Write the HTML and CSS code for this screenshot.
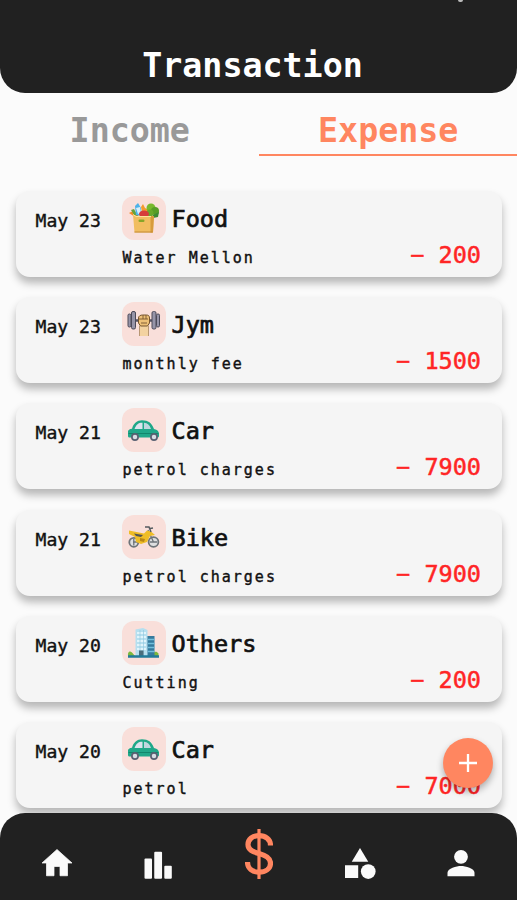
FILE: index.html
```html
<!DOCTYPE html>
<html lang="en">
  <head>
    <meta charset="UTF-8" />
    <meta name="viewport" content="width=device-width, initial-scale=1.0" />
    <title>Transaction</title>
    <link rel="stylesheet" href="styles.css">
  </head>
  <body>
    <svg class="sprite" width="0" height="0">
      <symbol id="car" viewBox="0 0 44 44">
        <path d="M6 28v-4.500c0-1.600 1.500-2.300 4-2.700 1.600-5.500 5-8.500 10-8.500 6.500 0 9.500 2.700 12 8.700 3.500.7 5 2.500 5 5V28c0 1-.8 1.500-2 1.500H8c-1.300 0-2-.5-2-1.500z" fill="#20a889" />
        <path d="M12.500 21c1.600-4.300 4-6.200 7.500-6.200h.5V21z" fill="#dce3ee" />
        <path d="M22 14.800c3.600.2 5.600 2.200 7 6.200h-7z" fill="#bfd7df" />
        <path d="M6.500 25.500h30" stroke="#11866c" />
        <circle cx="13" cy="29" r="3.100" fill="#d8dce3" stroke="#596172" stroke-width="1.700" />
        <circle cx="32" cy="29" r="3.100" fill="#d8dce3" stroke="#596172" stroke-width="1.700" />
      </symbol>
    </svg>

    <header class="header">
      <span class="header__mark"></span>
      <h1>Transaction</h1>
    </header>

    <nav class="tabs">
      <a class="tab">Income</a>
      <a class="tab tab--active">Expense</a>
    </nav>

    <main class="list">
      <article class="card">
        <span class="card__date">May 23</span>
        <div class="card__body">
          <div class="card__title">
            <svg class="card__icon" viewBox="0 0 44 44">
              <path d="M7 17l4-2 6 5-4 1z" fill="#f28c28" />
              <path d="M9 14l3-1 4 7-4-1z" fill="#67a33b" />
              <path d="M13 10l3-3 3 5 1 8-6-1z" fill="#4db2e8" />
              <path d="M14 12l4-1 1 6-3 1z" fill="#d7effa" />
              <path d="M21 20l-2-9 2-3 2 4 4 2-1 7z" fill="#f39a2d" />
              <circle cx="29" cy="12" r="4.500" fill="#79b82e" />
              <circle cx="33" cy="15" r="4" fill="#579d27" />
              <circle cx="28" cy="17" r="3.500" fill="#68a82b" />
              <path d="M31 19l6-3-1 5-5 1z" fill="#3d8b35" />
              <ellipse cx="22" cy="18" rx="5" ry="3.500" fill="#d63c3b" />
              <path d="M11 18.500l3 1.500h18l-1 16.500H12.500z" fill="#f1bd60" />
              <path d="M28.500 20H32l-1 16.500h-2.500z" fill="#d79b3b" />
              <path d="M11 18.500l3 2h15" fill="none" stroke="#ffe09a" />
              <path d="M12.500 36h18" stroke="#c48a35" />
              <rect x="16.500" y="23.500" width="6" height="2.500" rx="1.200" fill="#86a528" />
            </svg>
            <h2>Food</h2>
          </div>
          <p>Water Mellon</p>
        </div>
        <span class="card__amount">− 200</span>
      </article>

      <article class="card">
        <span class="card__date">May 23</span>
        <div class="card__body">
          <div class="card__title">
            <svg class="card__icon" viewBox="0 0 44 44">
              <path d="M17.500 22h9V34h-9z" fill="#f3d2a0" />
              <path d="M17.500 24v10M26.500 24v10" stroke="#a8865f" stroke-width=".8" />
              <path d="M6 18.500h32" stroke="#555463" stroke-width="2.500" />
              <g fill="#9694a8" stroke="#4c4a59">
                <rect x="6" y="12" width="3" height="13" rx="1.300" />
                <rect x="9.500" y="9.500" width="4" height="17.500" rx="1.500" />
                <rect x="30" y="9.500" width="4" height="17.500" rx="1.500" />
                <rect x="34.500" y="12" width="3" height="13" rx="1.300" />
              </g>
              <path d="M16.500 16c0-2 2-3 4-3h4c2 0 3 1 3 3v5l-2 3h-7l-2-3z" fill="#edc077" stroke="#76552f" />
              <path d="M17 17h9M19 21h6M21 13v4M24 13v4" stroke="#76552f" stroke-width=".9" />
            </svg>
            <h2>Jym</h2>
          </div>
          <p>monthly fee</p>
        </div>
        <span class="card__amount">− 1500</span>
      </article>

      <article class="card">
        <span class="card__date">May 21</span>
        <div class="card__body">
          <div class="card__title">
            <svg class="card__icon"><use href="#car" /></svg>
            <h2>Car</h2>
          </div>
          <p>petrol charges</p>
        </div>
        <span class="card__amount">− 7900</span>
      </article>

      <article class="card">
        <span class="card__date">May 21</span>
        <div class="card__body">
          <div class="card__title">
            <svg class="card__icon" viewBox="0 0 44 44">
              <g fill="#dedfe0" stroke="#6e7479" stroke-width="1.800">
                <circle cx="11.800" cy="27.300" r="4.500" />
                <circle cx="31.500" cy="27" r="4.900" />
              </g>
              <path d="M11 27h10l3-3M26 15l5.500 12M11.800 24v6.500M28 27h7" fill="none" stroke="#6e7479" stroke-width="1.300" />
              <path d="M7 15.500l10 2 5 1 3-3 4 1 4 3.500-5 1-3 6-6 2-5-2-1-5-6-3z" fill="#efbd27" />
              <path d="M12 18.500l9 1.500-2 2-5-1z" fill="#545554" />
              <path d="M18 23l5 1-1 3-4-1z" fill="#b98715" />
              <path d="M23 12h4l2 5M28 13.500l3-.5" fill="none" stroke="#555b60" stroke-width="1.500" />
            </svg>
            <h2>Bike</h2>
          </div>
          <p>petrol charges</p>
        </div>
        <span class="card__amount">− 7900</span>
      </article>

      <article class="card">
        <span class="card__date">May 20</span>
        <div class="card__body">
          <div class="card__title">
            <svg class="card__icon" viewBox="0 0 44 44">
              <path d="M6 35c-.5-4 1.500-5.500 4-3.500L13 35zM30 35c1-4 4-6 6.500-2.500V35z" fill="#7db83c" />
              <path d="M24 15h8.500v20H24z" fill="#367b9e" />
              <path d="M26 18.500h6.500M26 22.500h6.500M26 26.500h6.500M26 30.500h6.500" stroke="#72bfdc" stroke-width="1.500" />
              <path d="M13.500 8.500L21 7l4.500 2v26h-12z" fill="#b5dfef" />
              <path d="M15 12h9M15 16h9M15 20h9M15 24h9M15 28h9" stroke="#e0f4fb" stroke-width="1.800" />
              <path d="M18 9v26M21.500 9v26" stroke="#94c9df" stroke-width=".7" />
              <path d="M17 29.500h4.500V35H17z" fill="#496e7d" />
              <path d="M6 35.500h31" stroke="#217b9a" stroke-width="2.500" />
            </svg>
            <h2>Others</h2>
          </div>
          <p>Cutting</p>
        </div>
        <span class="card__amount">− 200</span>
      </article>

      <article class="card">
        <span class="card__date">May 20</span>
        <div class="card__body">
          <div class="card__title">
            <svg class="card__icon"><use href="#car" /></svg>
            <h2>Car</h2>
          </div>
          <p>petrol</p>
        </div>
        <span class="card__amount">− 7000</span>
      </article>
    </main>

    <button class="fab" aria-label="Add">
      <svg viewBox="0 0 18 18"><path d="M9 0v18M0 9h18" /></svg>
    </button>

    <footer class="navbar">
      <a class="navbar__item">
        <svg viewBox="0 0 24 24"><path d="M10 20.500v-6.200h4v6.200h5V12h3L12 3 2 12h3v8.500z" stroke-width=".5" stroke-linejoin="round" stroke="currentColor" /></svg>
      </a>
      <a class="navbar__item">
        <svg viewBox="0 0 24 24">
          <rect x="3" y="9" width="5" height="13.500" rx=".7" />
          <rect x="9.500" y="4.500" width="5.200" height="18" rx=".7" />
          <rect x="16.200" y="13.800" width="5" height="8.700" rx=".7" />
        </svg>
      </a>
      <a class="navbar__item navbar__item--active">
        <svg viewBox="0 0 28 50">
          <path d="M14 0v50" stroke-width="3.200" />
          <path d="M25.500 16.500C25.500 10.500 20.500 6.700 14 6.700S3 10.200 3 15.500c0 5.300 4.500 7.300 11 9s11.500 4 11.500 9.700c0 5.600-5 8.900-11.500 8.900S2.500 39.500 2.500 33" stroke-width="5.200" />
        </svg>
      </a>
      <a class="navbar__item">
        <svg viewBox="0 0 24 24">
          <path d="M12 2l-5.500 9.200h11z" />
          <circle cx="17.500" cy="17.700" r="4.900" />
          <path d="M2 13.500h8.800V22H2z" />
        </svg>
      </a>
      <a class="navbar__item">
        <svg viewBox="0 0 24 24">
          <circle cx="12" cy="7.900" r="4.600" />
          <path d="M3 20.800v-2.300c0-3 6-4.500 9-4.500s9 1.500 9 4.500v2.300z" />
        </svg>
      </a>
    </footer>
  </body>
</html>
```
FILE: styles.css
```css
* {
  padding: 0;
  margin: 0;
  box-sizing: border-box;
}

:root {
  --dark: #212121;
  --accent: #ff8660;
  --background: #fbfbfb;
  --card: #f5f5f5;
  --amount: #ff2525;
}

body {
  height: 100vh;
  overflow: hidden;
  position: relative;
  display: flex;
  flex-direction: column;
  background-color: var(--background);
  font-family: "DejaVu Sans Mono", monospace;
  color: #111;
}

.sprite {
  position: absolute;
}

.header {
  position: relative;
  flex: none;
  height: 93px;
  padding: 46px 12px 0 0;
  border-radius: 0 0 25px 25px;
  background-color: var(--dark);
  text-align: center;
}

.header h1 {
  font-size: 33.3px;
  line-height: 40px;
  color: #fff;
}

.header__mark {
  position: absolute;
  top: 0;
  right: 54px;
  width: 5px;
  height: 2px;
  border-radius: 0 0 2px 2px;
  background-color: #bbb;
}

.tabs {
  flex: none;
  display: flex;
  height: 63px;
}

.tab {
  flex: 1;
  padding: 18px 0 0 1px;
  font-size: 33.3px;
  font-weight: bold;
  line-height: 40px;
  text-align: center;
  color: #999;
}

.tab--active {
  color: var(--accent);
  border-bottom: 2px solid var(--accent);
}

.list {
  flex: 1;
  min-height: 0;
  display: flex;
  flex-direction: column;
  gap: 20.2px;
  padding: 35px 15px 0 16px;
}

.card {
  flex: none;
  display: flex;
  height: 86px;
  padding: 5px 21px 0 19.5px;
  border-radius: 14px;
  background-color: var(--card);
  box-shadow: 0 6px 8px rgba(0, 0, 0, 0.28);
}

.card__date {
  width: 86px;
  padding-top: 14px;
  font-size: 18.1px;
  line-height: 22px;
  -webkit-text-stroke: 0.4px;
}

.card__body {
  flex: 1;
}

.card__title {
  display: flex;
  gap: 6px;
}

.card__icon {
  width: 44px;
  height: 44px;
  border-radius: 12px;
  background-color: #f9dfda;
}

.card h2 {
  padding-top: 9px;
  font-size: 23.5px;
  font-weight: normal;
  line-height: 28px;
  -webkit-text-stroke: 0.7px;
}

.card p {
  padding: 8px 0 0 1px;
  font-size: 15px;
  line-height: 20px;
  letter-spacing: 2px;
  -webkit-text-stroke: 0.4px;
}

.card__amount {
  align-self: flex-end;
  padding-bottom: 8px;
  font-size: 23.5px;
  line-height: 28px;
  color: var(--amount);
  -webkit-text-stroke: 0.5px;
}

.fab {
  position: absolute;
  right: 24.5px;
  bottom: 112px;
  width: 50px;
  height: 50px;
  display: flex;
  justify-content: center;
  align-items: center;
  border: none;
  border-radius: 50%;
  background-color: var(--accent);
  box-shadow: 0 4px 7px rgba(0, 0, 0, 0.3);
}

.fab svg {
  width: 18px;
  height: 18px;
  stroke: #fff;
  stroke-width: 2.3;
}

.navbar {
  position: relative;
  flex: none;
  display: flex;
  height: 87px;
  padding: 0 6px 0 7px;
  border-radius: 25px 25px 0 0;
  background-color: var(--dark);
}

.navbar__item {
  flex: 1;
  display: flex;
  justify-content: center;
  align-items: center;
  padding-top: 12px;
  color: #fafafa;
}

.navbar__item svg {
  width: 36px;
  height: 36px;
  fill: currentColor;
}

.navbar__item--active {
  padding-top: 0;
  padding-bottom: 5px;
  color: var(--accent);
}

.navbar__item--active svg {
  flex: none;
  width: 28px;
  height: 50px;
  fill: none;
  stroke: currentColor;
}
```
